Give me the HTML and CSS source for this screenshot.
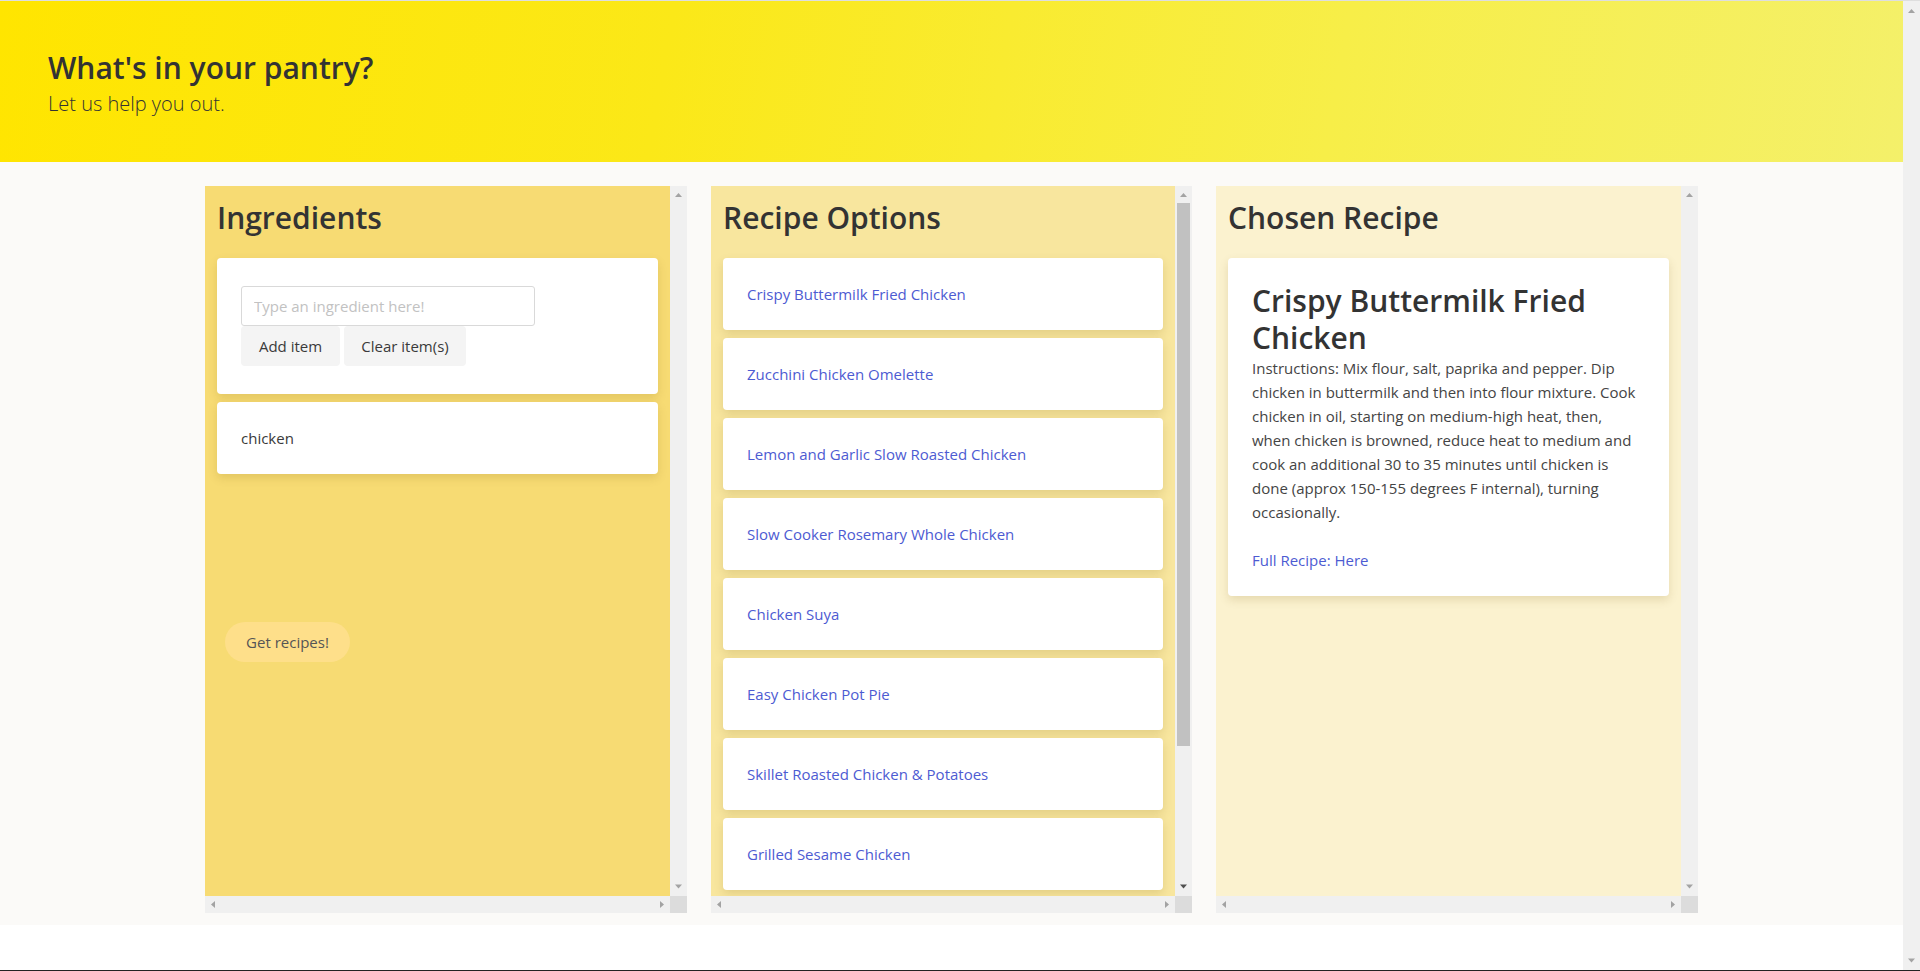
FILE: index.html
```html
<!DOCTYPE html>
<html lang="en">
<head>
<meta charset="utf-8">
<title>What's in your pantry?</title>
<link rel="stylesheet" href="styles.css">
</head>
<body>
<div class="page">
  <header class="hero">
    <h1 class="hero-title">What's in your pantry?</h1>
    <p class="hero-lead">Let us help you out.</p>
  </header>
  <main class="board">
    <section class="panel">
      <div class="panel-body panel-ingredients">
        <h2 class="panel-title">Ingredients</h2>
        <div class="card card-form">
          <input class="ing-input" type="text" placeholder="Type an ingredient here!">
          <div class="btn-row"><button class="btn btn-add" type="button">Add item</button><button class="btn btn-clear" type="button">Clear item(s)</button></div>
        </div>
        <ul class="ing-list">
          <li class="card card-item">chicken</li>
        </ul>
        <button class="btn-get" type="button">Get recipes!</button>
      </div>
      <div class="vbar">
        <span class="sb-btn"><svg width="17" height="17" viewBox="0 0 17 17"><polygon points="5,11 8.5,7 12,11" fill="#a3a3a3"/></svg></span>
        <span class="sb-track"></span>
        <span class="sb-btn"><svg width="17" height="17" viewBox="0 0 17 17"><polygon points="5,5.5 12,5.5 8.5,9.5" fill="#a3a3a3"/></svg></span>
      </div>
      <div class="hbar">
        <span class="sb-btn"><svg width="17" height="17" viewBox="0 0 17 17"><polygon points="10,5 10,12 6,8.5" fill="#a3a3a3"/></svg></span>
        <span class="sb-track"></span>
        <span class="sb-btn"><svg width="17" height="17" viewBox="0 0 17 17"><polygon points="7,5 7,12 11,8.5" fill="#a3a3a3"/></svg></span>
      </div>
      <div class="sb-corner"></div>
    </section>

    <section class="panel">
      <div class="panel-body panel-options">
        <h2 class="panel-title">Recipe Options</h2>
        <ul class="recipe-list">
          <li class="card card-item"><a class="link" href="#">Crispy Buttermilk Fried Chicken</a></li>
          <li class="card card-item"><a class="link" href="#">Zucchini Chicken Omelette</a></li>
          <li class="card card-item"><a class="link" href="#">Lemon and Garlic Slow Roasted Chicken</a></li>
          <li class="card card-item"><a class="link" href="#">Slow Cooker Rosemary Whole Chicken</a></li>
          <li class="card card-item"><a class="link" href="#">Chicken Suya</a></li>
          <li class="card card-item"><a class="link" href="#">Easy Chicken Pot Pie</a></li>
          <li class="card card-item"><a class="link" href="#">Skillet Roasted Chicken &amp; Potatoes</a></li>
          <li class="card card-item"><a class="link" href="#">Grilled Sesame Chicken</a></li>
        </ul>
      </div>
      <div class="vbar">
        <span class="sb-btn"><svg width="17" height="17" viewBox="0 0 17 17"><polygon points="5,11 8.5,7 12,11" fill="#a3a3a3"/></svg></span>
        <span class="sb-track"><span class="sb-thumb thumb-options"></span></span>
        <span class="sb-btn"><svg width="17" height="17" viewBox="0 0 17 17"><polygon points="5,5.5 12,5.5 8.5,9.5" fill="#505050"/></svg></span>
      </div>
      <div class="hbar">
        <span class="sb-btn"><svg width="17" height="17" viewBox="0 0 17 17"><polygon points="10,5 10,12 6,8.5" fill="#a3a3a3"/></svg></span>
        <span class="sb-track"></span>
        <span class="sb-btn"><svg width="17" height="17" viewBox="0 0 17 17"><polygon points="7,5 7,12 11,8.5" fill="#a3a3a3"/></svg></span>
      </div>
      <div class="sb-corner"></div>
    </section>

    <section class="panel">
      <div class="panel-body panel-chosen">
        <h2 class="panel-title">Chosen Recipe</h2>
        <article class="card card-recipe">
          <h3 class="recipe-title">Crispy Buttermilk Fried Chicken</h3>
          <p class="recipe-text">Instructions: Mix flour, salt, paprika and pepper. Dip<br>chicken in buttermilk and then into flour mixture. Cook<br>chicken in oil, starting on medium-high heat, then,<br>when chicken is browned, reduce heat to medium and<br>cook an additional 30 to 35 minutes until chicken is<br>done (approx 150-155 degrees F internal), turning<br>occasionally.</p>
          <a class="link" href="#">Full Recipe: Here</a>
        </article>
      </div>
      <div class="vbar">
        <span class="sb-btn"><svg width="17" height="17" viewBox="0 0 17 17"><polygon points="5,11 8.5,7 12,11" fill="#a3a3a3"/></svg></span>
        <span class="sb-track"></span>
        <span class="sb-btn"><svg width="17" height="17" viewBox="0 0 17 17"><polygon points="5,5.5 12,5.5 8.5,9.5" fill="#a3a3a3"/></svg></span>
      </div>
      <div class="hbar">
        <span class="sb-btn"><svg width="17" height="17" viewBox="0 0 17 17"><polygon points="10,5 10,12 6,8.5" fill="#a3a3a3"/></svg></span>
        <span class="sb-track"></span>
        <span class="sb-btn"><svg width="17" height="17" viewBox="0 0 17 17"><polygon points="7,5 7,12 11,8.5" fill="#a3a3a3"/></svg></span>
      </div>
      <div class="sb-corner"></div>
    </section>
  </main>
</div>
<div class="page-bar">
  <span class="sb-btn"><svg width="17" height="17" viewBox="0 0 17 17"><polygon points="5,12 8.5,8 12,12" fill="#a3a3a3"/></svg></span>
  <span class="sb-track"></span>
  <span class="sb-btn"><svg width="17" height="17" viewBox="0 0 17 17"><polygon points="5,5.5 12,5.5 8.5,9.5" fill="#a3a3a3"/></svg></span>
</div>
</body>
</html>
```

FILE: styles.css
```css
html {
  background: #ffffff;
}

body {
  box-sizing: border-box;
  display: flex;
  height: 971px;
  margin: 0;
  overflow: hidden;
  border-top: 1px solid #dedede;
  border-bottom: 1px solid #222222;
  font-family: "Open Sans", "Noto Sans", sans-serif;
  font-size: 15px;
  line-height: 24px;
  color: #3a3a3a;
  background: #ffffff;
}

.page {
  flex: 1;
  min-width: 0;
}

/* ---------- scrollbar look-alikes ---------- */
.page-bar,
.vbar {
  display: flex;
  flex-direction: column;
  width: 17px;
  background: #f0f0f0;
}
.hbar {
  display: flex;
  height: 17px;
  background: #f0f0f0;
}
.sb-btn {
  flex: none;
  width: 17px;
  height: 17px;
}
.sb-btn svg {
  display: block;
}
.sb-track {
  flex: 1;
}
.sb-thumb {
  display: block;
  margin: 0 2px;
  background: #c1c1c1;
}
.thumb-options {
  height: 543px;
}
.sb-corner {
  background: #dcdcdc;
}

/* ---------- header ---------- */
.hero {
  padding: 48px 48px 43px;
  background: linear-gradient(100deg, #ffe500 0%, #fbe818 35%, #f7ee48 70%, #f4f06a 100%);
}
.hero-title {
  margin: 0 0 1.5px;
  font-size: 30px;
  line-height: 38.4px;
  font-weight: 600;
  color: #333333;
}
.hero-lead {
  margin: 0;
  font-size: 20px;
  line-height: 30px;
  font-weight: 300;
  color: #333333;
}

/* ---------- board ---------- */
.board {
  display: grid;
  grid-template-columns: 482px 481px 482px;
  column-gap: 24px;
  justify-content: center;
  padding: 24px 0 12px;
  background: #fbfaf8;
}

.panel {
  display: grid;
  grid-template-columns: 1fr 17px;
  grid-template-rows: 1fr 17px;
  height: 727px;
}

.panel-body {
  min-width: 0;
  min-height: 0;
  overflow: hidden;
  padding: 12px;
}
.panel-ingredients { background: #f7db73; }
.panel-options { background: #f8e69e; }
.panel-chosen { background: #fbf2cf; }

.panel-title {
  margin: 1px 0 21px;
  font-size: 30px;
  line-height: 38.4px;
  font-weight: 600;
  color: #333333;
}

.card {
  background: #ffffff;
  border-radius: 4px;
  box-shadow: 0 4px 10px rgba(120, 90, 0, 0.16);
}

.card-form {
  padding: 28px 24px;
}
.ing-input {
  display: block;
  box-sizing: border-box;
  width: 294px;
  height: 40px;
  margin: 0;
  padding: 0 12px;
  border: 1px solid #d9d9d9;
  border-radius: 3px;
  font-family: inherit;
  font-size: 15px;
  color: #333333;
  outline: none;
}
.ing-input::placeholder {
  color: #c2c2c2;
}
.btn-row {
  display: flex;
  gap: 4px;
}
.btn {
  height: 40px;
  padding: 0;
  border: 0;
  border-radius: 4px;
  background: #f4f4f4;
  font-family: inherit;
  font-size: 15px;
  color: #3a3a3a;
}
.btn-add { width: 99px; }
.btn-clear { width: 122px; }

.ing-list,
.recipe-list {
  list-style: none;
  margin: 0;
  padding: 0;
}
.ing-list {
  min-height: 212px;
  margin-top: 8px;
}
.recipe-list {
  display: flex;
  flex-direction: column;
  gap: 8px;
}
.card-item {
  padding: 24px;
}

.btn-get {
  display: block;
  width: 125px;
  height: 40px;
  margin: 8px 0 0 8px;
  padding: 0;
  border: 0;
  border-radius: 20px;
  background: #fedf8a;
  font-family: inherit;
  font-size: 15px;
  color: #555555;
}

.link {
  color: #4d5bd2;
  text-decoration: none;
}

.card-recipe {
  padding: 24px;
}
.recipe-title {
  margin: 0;
  font-size: 30px;
  line-height: 37px;
  font-weight: 600;
  color: #333333;
}
.recipe-text {
  margin: 0 0 24px;
  white-space: nowrap;
  color: #444444;
}
```
